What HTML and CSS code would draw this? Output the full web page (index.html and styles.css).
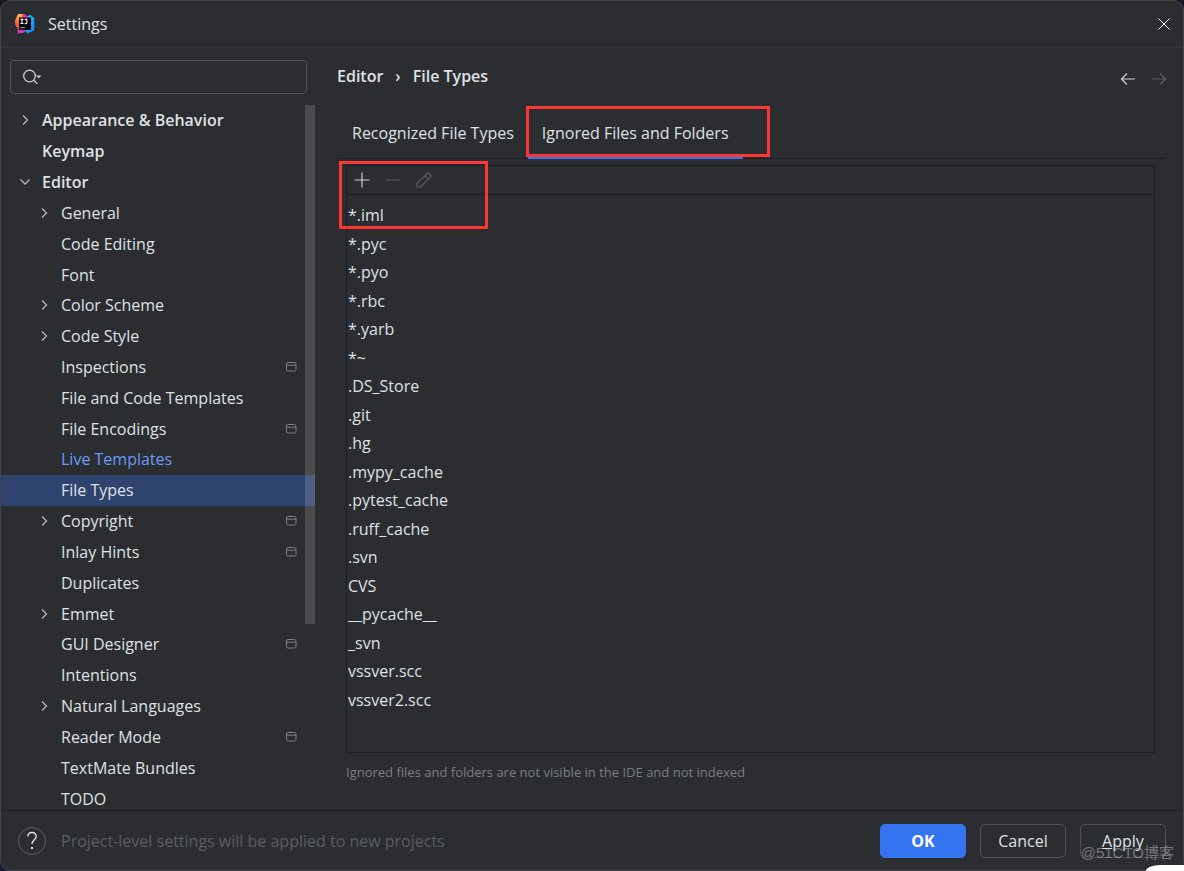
FILE: index.html
```html
<!DOCTYPE html>
<html lang="en">
<head>
<meta charset="utf-8">
<title>Settings</title>
<link rel="stylesheet" href="styles.css">
</head>
<body>
<svg class="sprite" aria-hidden="true">
  <symbol id="right" viewBox="0 0 16 16"><path d="M6 3.5 10.5 8 6 12.5"/></symbol>
  <symbol id="down" viewBox="0 0 16 16"><path d="M3.5 5.5 8 10l4.5-4.5"/></symbol>
  <symbol id="project" viewBox="0 0 12 12"><rect x="1.5" y="1.5" width="9.5" height="8.5" rx="1.5"/><path d="M1.5 4.2H11"/></symbol>
</svg>
<div class="window">
  <header class="titlebar">
    <svg class="logo" viewBox="0 0 20 20" aria-hidden="true">
      <defs>
        <linearGradient id="warm" x1="0" y1="0" x2="0" y2="1"><stop offset="0" stop-color="#fcc24a"/><stop offset=".4" stop-color="#fb6a35"/><stop offset="1" stop-color="#f22e8c"/></linearGradient>
        <linearGradient id="cool" x1="0" y1="0" x2="1" y2="1"><stop offset="0" stop-color="#20d5f5"/><stop offset="1" stop-color="#147bf5"/></linearGradient>
      </defs>
      <path fill="url(#cool)" d="M12 2.5 15 .8 19.3 4v12.6L12.5 19.6 9 16z"/>
      <path fill="url(#warm)" d="M3 0h5l2 3v12l-7.5 4.5L3 15 .3 11 0 6.5z"/>
      <path fill="#e935a5" d="m7 1 3-1 3.5 3.5H7z"/>
      <path fill="#d03cc0" d="m2.5 19.5 1-4h8l-3 3.3z"/>
      <rect x="4" y="3.5" width="12" height="12.5" fill="#090409"/>
      <path fill="none" stroke="#fff" stroke-width="1.1" d="M5.5 5.4h3M7 5.4v4.1M5.5 9.5h3M9.7 5.4h2.2v3q0 1.2-1.2 1.2h-1"/>
      <path stroke="#bbb" d="M5.5 13.7h4.3"/>
    </svg>
    <h1 class="title">Settings</h1>
    <button class="icon-button" aria-label="Close"><svg class="icon close" viewBox="0 0 16 16"><path d="m2.5 2.5 11 11m0-11-11 11"/></svg></button>
  </header>

  <div class="content">
    <aside class="sidebar">
      <label class="search">
        <svg class="search-icon" viewBox="0 0 22 16" aria-hidden="true"><circle cx="7.5" cy="7" r="5.8"/><path d="m11.700 11.200 3.500 3.500"/><path class="solid" d="M14 6.500h5.500L16.800 9.200z"/></svg>
        <input class="search-input" type="text" aria-label="Search settings">
      </label>
      <nav class="tree-area" aria-label="Settings categories">
        <ul class="tree">
          <li class="node top"><svg class="icon"><use href="#right"/></svg><span>Appearance &amp; Behavior</span></li>
          <li class="node top"><span>Keymap</span></li>
          <li class="node top"><svg class="icon"><use href="#down"/></svg><span>Editor</span></li>
          <li class="node"><svg class="icon"><use href="#right"/></svg><span>General</span></li>
          <li class="node"><span>Code Editing</span></li>
          <li class="node"><span>Font</span></li>
          <li class="node"><svg class="icon"><use href="#right"/></svg><span>Color Scheme</span></li>
          <li class="node"><svg class="icon"><use href="#right"/></svg><span>Code Style</span></li>
          <li class="node"><span>Inspections</span><svg class="badge"><use href="#project"/></svg></li>
          <li class="node"><span>File and Code Templates</span></li>
          <li class="node"><span>File Encodings</span><svg class="badge"><use href="#project"/></svg></li>
          <li class="node modified"><span>Live Templates</span></li>
          <li class="node selected"><span>File Types</span></li>
          <li class="node"><svg class="icon"><use href="#right"/></svg><span>Copyright</span><svg class="badge"><use href="#project"/></svg></li>
          <li class="node"><span>Inlay Hints</span><svg class="badge"><use href="#project"/></svg></li>
          <li class="node"><span>Duplicates</span></li>
          <li class="node"><svg class="icon"><use href="#right"/></svg><span>Emmet</span></li>
          <li class="node"><span>GUI Designer</span><svg class="badge"><use href="#project"/></svg></li>
          <li class="node"><span>Intentions</span></li>
          <li class="node"><svg class="icon"><use href="#right"/></svg><span>Natural Languages</span></li>
          <li class="node"><span>Reader Mode</span><svg class="badge"><use href="#project"/></svg></li>
          <li class="node"><span>TextMate Bundles</span></li>
          <li class="node"><span>TODO</span></li>
        </ul>
        <div class="scroll-thumb"></div>
      </nav>
    </aside>

    <main class="main">
      <div class="heading">
        <h2 class="breadcrumb"><span>Editor</span><span class="separator">›</span><span>File Types</span></h2>
        <div class="history">
          <button class="icon-button" aria-label="Back"><svg class="icon" viewBox="0 0 16 16"><path d="M15 8H1.5m5.5-5.5L1.5 8 7 13.5"/></svg></button>
          <button class="icon-button" aria-label="Forward" disabled><svg class="icon" viewBox="0 0 16 16"><path d="M1 8h13.5M9 2.5 14.5 8 9 13.5"/></svg></button>
        </div>
      </div>
      <div class="tabs" role="tablist">
        <button class="tab" role="tab" aria-selected="false">Recognized File Types</button>
        <button class="tab active" role="tab" aria-selected="true">Ignored Files and Folders</button>
        <div class="mark mark-tab"></div>
      </div>
      <section class="panel">
        <div class="mark mark-list"></div>
        <div class="toolbar">
          <button class="icon-button" aria-label="Add"><svg class="icon" viewBox="0 0 16 16"><path d="M8 .5v15M.5 8h15"/></svg></button>
          <button class="icon-button" aria-label="Remove" disabled><svg class="icon" viewBox="0 0 16 16"><path d="M.5 8h15"/></svg></button>
          <button class="icon-button" aria-label="Edit" disabled><svg class="icon" viewBox="0 0 16 16"><path d="M1 11.5 11 1.5q1-1 2 0l1.5 1.5q1 1 0 2l-10 10H1zM8.8 3.7l3.5 3.5"/></svg></button>
        </div>
        <ul class="patterns">
          <li>*.iml</li><li>*.pyc</li><li>*.pyo</li><li>*.rbc</li><li>*.yarb</li><li>*~</li>
          <li>.DS_Store</li><li>.git</li><li>.hg</li><li>.mypy_cache</li><li>.pytest_cache</li><li>.ruff_cache</li>
          <li>.svn</li><li>CVS</li><li>__pycache__</li><li>_svn</li><li>vssver.scc</li><li>vssver2.scc</li>
        </ul>
      </section>
      <p class="note">Ignored files and folders are not visible in the IDE and not indexed</p>
    </main>
  </div>

  <footer class="footer">
    <button class="help" aria-label="Help"><svg class="help-icon" viewBox="0 0 12 20"><path d="M1.8 5.5Q2 1.5 6 1.5T10.2 5.5C10.2 8.5 6 9 6 13"/><path class="solid" d="M5 16h2v2H5z"/></svg></button>
    <span class="hint">Project-level settings will be applied to new projects</span>
    <div class="actions">
      <button class="button primary">OK</button>
      <button class="button">Cancel</button>
      <button class="button"><span><u>A</u>pply</span></button>
    </div>
  </footer>
</div>
<div class="watermark">@51CTO博客</div>
<div class="corner"></div>
</body>
</html>
```

FILE: styles.css
```css
* { box-sizing: border-box; }
body {
  margin: 0;
  height: 100vh;
  overflow: hidden;
  position: relative;
  background: #15192a;
  color: #dfe1e5;
  font: 16px/20px "Open Sans", "Noto Sans CJK SC", sans-serif;
}
ul, h1, h2, p { margin: 0; padding: 0; list-style: none; font: inherit; }
button { font: inherit; color: inherit; background: none; border: 0; padding: 0; }
svg { fill: none; stroke: currentColor; flex: none; }
.solid { fill: currentColor; stroke: none; }
.sprite { position: absolute; width: 0; height: 0; }
.icon { display: block; width: 16px; height: 16px; color: #ced0d6; }

.window {
  height: 100%;
  display: flex;
  flex-direction: column;
  background: #2b2d30;
  border: 1px solid #43454a;
  border-radius: 10px;
  overflow: hidden;
}
.titlebar {
  flex: none;
  height: 47px;
  display: flex;
  align-items: center;
  padding: 0 11px 0 14px;
  border-bottom: 1px solid #36383c;
}
.logo { width: 20px; height: 20px; stroke: none; }
.title { flex: 1; padding-left: 13px; }
.close { color: #ffffff; }

.content { flex: 1; min-height: 0; display: flex; }
.sidebar { flex: none; width: 314px; display: flex; flex-direction: column; }
.search {
  flex: none;
  height: 34px;
  margin: 12px 8px 11px 9px;
  padding: 0 11px;
  display: flex;
  align-items: center;
  border: 1px solid #4e5157;
  border-radius: 4px;
}
.search-icon { width: 22px; height: 16px; color: #ced0d6; stroke-width: 1.3; }
.search-input { flex: 1; min-width: 0; background: none; border: 0; outline: 0; color: inherit; font: inherit; }
.tree-area { flex: 1; min-height: 0; position: relative; overflow: hidden; }
.tree { height: calc(100% + 4px); display: grid; grid-auto-rows: 1fr; }
.node {
  display: flex;
  align-items: center;
  gap: 9px;
  padding: 0 18px 0 60px;
}
.node.top { padding-left: 41px; font-weight: 600; }
.node .icon { margin-left: -25px; color: #b4b8bf; stroke-width: 1.3; }
.badge { width: 12px; height: 12px; margin-left: auto; color: #7a7e85; }
.modified { color: #6b9bfa; }
.selected { background: #2e436e; }
.scroll-thumb {
  position: absolute;
  top: 0;
  right: 0;
  width: 10px;
  height: 73.6%;
  background: rgba(255, 255, 255, 0.15);
}

.main { flex: 1; min-width: 0; display: flex; flex-direction: column; padding: 0 18px 0 22px; }
.heading { flex: none; height: 58px; padding-bottom: 2px; display: flex; align-items: center; justify-content: space-between; }
.breadcrumb { display: flex; gap: 12px; font-weight: 600; }
.history { display: flex; gap: 15px; padding-top: 5px; margin-right: -2px; }
.history .icon, .toolbar .icon { stroke-width: 1.2; }
.icon-button:disabled .icon { color: #5a5d63; }
.tabs { flex: none; height: 53px; padding-left: 1px; display: flex; position: relative; border-bottom: 1px solid #1e1f22; }
.tab { margin-bottom: -1px; padding: 3px 14px 0; border-bottom: 3px solid transparent; }
.tab.active { border-bottom-color: #3574f0; }
.panel {
  flex: 1;
  min-height: 0;
  margin: 6px 10px 0 9px;
  display: flex;
  flex-direction: column;
  position: relative;
  border: 1px solid #1e1f22;
}
.toolbar {
  flex: none;
  height: 29px;
  display: flex;
  align-items: center;
  gap: 15px;
  padding: 0 7px;
  border-bottom: 1px solid #1e1f22;
}
.patterns { flex: 1; display: grid; grid-auto-rows: 1fr; align-items: center; padding: 6px 1px 38px; }
.note { flex: none; height: 57px; padding: 9px 9px 0; font-size: 13px; color: #7c7d80; }

.mark { position: absolute; border: 3px solid #fc3535; pointer-events: none; z-index: 1; }
.mark-tab { left: 189px; top: 0; width: 244px; height: 51px; }
.mark-list { left: -8px; top: -5px; width: 149px; height: 68px; }

.footer {
  flex: none;
  height: 60px;
  display: flex;
  align-items: center;
  padding: 0 17px;
  border-top: 1px solid #1e1f22;
}
.help {
  width: 28px;
  height: 28px;
  display: grid;
  place-items: center;
  border: 1px solid #5a5d63;
  border-radius: 50%;
}
.help-icon { width: 12px; height: 20px; stroke-width: 1.4; }
.hint { flex: 1; padding-left: 15px; color: #5a5d63; }
.actions { display: flex; gap: 14px; }
.button { width: 86px; height: 34px; border: 1px solid #4e5157; border-radius: 5px; }
.primary { background: #3574f0; border-color: #3574f0; color: #ffffff; font-weight: 700; }

.watermark {
  position: absolute;
  right: 10px;
  bottom: 8px;
  font: 15px/20px "Liberation Sans", "Noto Sans CJK SC", sans-serif;
  color: rgba(190, 192, 196, 0.5);
}
.corner {
  position: absolute;
  right: 0;
  bottom: 0;
  width: 38px;
  height: 6px;
  background: #ffffff;
  border-top-left-radius: 14px 6px;
}
```
